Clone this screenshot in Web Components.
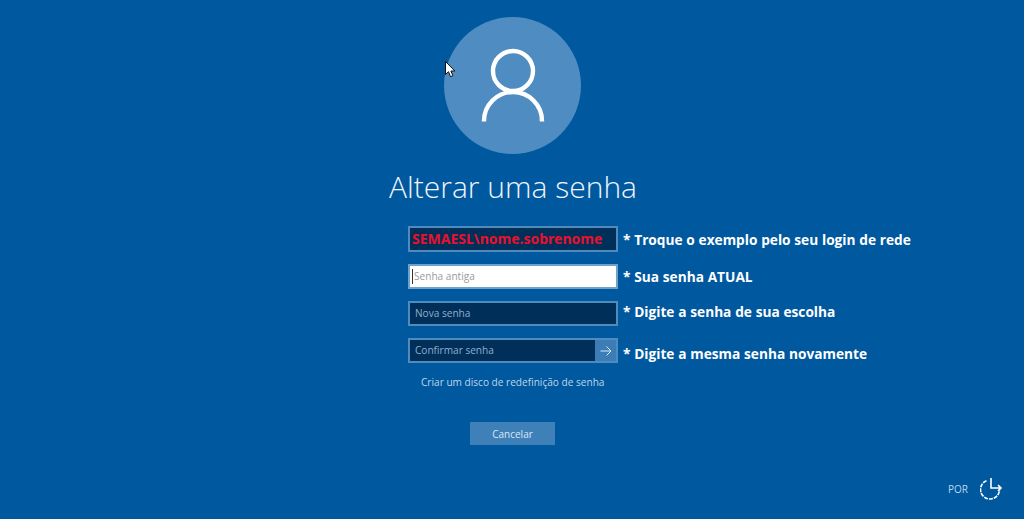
<!DOCTYPE html>
<html lang="pt">
<head>
<meta charset="utf-8">
<title>Alterar uma senha</title>
<style>
    html, body { margin: 0; height: 100%; }
    body { background: #00589f; overflow: hidden; }
</style>
</head>
<body>
<change-password-screen>
    <user-avatar slot="avatar"></user-avatar>
    <mouse-cursor slot="avatar"></mouse-cursor>
    <span slot="title">Alterar uma senha</span>

    <login-field tall value="SEMAESL\nome.sobrenome" note="* Troque o exemplo pelo seu login de rede"></login-field>
    <login-field focused placeholder="Senha antiga" note="* Sua senha ATUAL"></login-field>
    <login-field placeholder="Nova senha" note="* Digite a senha de sua escolha" nudge></login-field>
    <login-field submit placeholder="Confirmar senha" note="* Digite a mesma senha novamente"></login-field>

    <span slot="link">Criar um disco de redefinição de senha</span>
    <span slot="cancel">Cancelar</span>

    <system-tray slot="tray"></system-tray>
</change-password-screen>

<script>
class ChangePasswordScreen extends HTMLElement {
    constructor() {
        super();
        const template = document.createElement("template");
        template.innerHTML = ChangePasswordScreen.template();
        this.attachShadow({ mode: "open" });
        this.shadowRoot.appendChild(template.content.cloneNode(true));
    }

    static template() {
        return `
            <style>
                :host {
                    display: flex; flex-direction: column; height: 519px; box-sizing: border-box;
                    padding-top: 17px; color: #fff; position: relative;
                    font-family: "Open Sans", "Noto Sans", sans-serif;
                }
                .avatar { position: relative; align-self: center; height: 137px; }
                h1 {
                    margin: 11px 0 0 2px; align-self: center; font-weight: 300; font-size: 30px;
                    line-height: 44px; height: 43px; color: #eef5fb;
                }
                .fields { display: flex; flex-direction: column; gap: 12px; margin: 18px 0 0 408px; }
                .link { margin: 12px 0 0 421px; font-size: 10.1px; line-height: 15px; color: #bcd6ec; }
                .cancel {
                    align-self: flex-start; margin: 32px 0 0 470px; width: 85px; height: 23px;
                    background: #3f80b9; color: #d9e8f5; font-size: 10px; line-height: 24px; text-align: center;
                }
                .tray { position: absolute; right: 21px; bottom: 19px; }
            </style>
            <div class="avatar"><slot name="avatar"></slot></div>
            <h1><slot name="title"></slot></h1>
            <div class="fields"><slot></slot></div>
            <div class="link"><slot name="link"></slot></div>
            <div class="cancel"><slot name="cancel"></slot></div>
            <div class="tray"><slot name="tray"></slot></div>
        `;
    }
}

class UserAvatar extends HTMLElement {
    constructor() {
        super();
        this.attachShadow({ mode: "open" });
        this.shadowRoot.innerHTML = `
            <style>
                :host { display: block; width: 137px; height: 137px; border-radius: 50%; background: #4f8cc1; }
                svg { display: block; }
            </style>
            <svg width="137" height="137" viewBox="0 0 137 137" fill="none" stroke="#fff" stroke-width="4.4">
                <circle cx="69" cy="54" r="20"/>
                <path d="M40 104.500v-.500a29 29 0 0 1 58 0v.500"/>
            </svg>
        `;
    }
}

class MouseCursor extends HTMLElement {
    constructor() {
        super();
        this.attachShadow({ mode: "open" });
        this.shadowRoot.innerHTML = `
            <style>
                :host { position: absolute; left: 1px; top: 44px; width: 12px; height: 18px; }
                svg { display: block; }
            </style>
            <svg width="12" height="18" viewBox="0 0 12 18">
                <path d="M.5.5v13l3-2.800 2 5 2.400-1-2-4.700h4z" fill="#fff" stroke="#111" stroke-width="1"/>
            </svg>
        `;
    }
}

class LoginField extends HTMLElement {
    constructor() {
        super();
        const template = document.createElement("template");
        template.innerHTML = LoginField.template();
        this.attachShadow({ mode: "open" });
        this.shadowRoot.appendChild(template.content.cloneNode(true));
    }

    connectedCallback() {
        const value = this.getAttribute("value");
        this.shadowRoot.querySelector(".text").textContent = value || this.getAttribute("placeholder");
        this.shadowRoot.querySelector(".note").textContent = this.getAttribute("note");
        this.shadowRoot.querySelector(".box").classList.toggle("has-value", !!value);
    }

    static template() {
        return `
            <style>
                :host { display: flex; align-items: center; height: 25px; }
                :host([tall]) { height: 26px; }
                .box {
                    box-sizing: border-box; width: 210px; height: 100%; display: flex;
                    background: #002f5a; border: 2px solid #4f8bbd; color: #8fb0cc;
                    font-size: 10.1px; line-height: 21px;
                }
                .text { flex: 1; padding-left: 5px; white-space: nowrap; }
                .has-value .text {
                    color: #e8112d; font-family: "Noto Sans", sans-serif; font-weight: 700;
                    font-size: 14px; padding-left: 2px;
                }
                :host([focused]) .box { background: #fff; color: #9a9a9a; border-color: #6ea2cb; }
                :host([focused]) .text { padding-left: 3px; border-left: 1px solid transparent; position: relative; }
                :host([focused]) .text::before {
                    content: ""; position: absolute; left: 1px; top: 3px; width: 1px; height: 15px; background: #333;
                }
                .go { display: none; }
                :host([submit]) .box { border-right: 0; }
                :host([submit]) .go {
                    display: flex; align-items: center; justify-content: center;
                    width: 23px; margin: -2px 0; background: #3c7db7; border: 2px solid #4f8bbd;
                    box-sizing: border-box; border-left: 0;
                }
                .note {
                    margin-left: 5px; color: #fff; font-family: "Open Sans", sans-serif; font-weight: 700;
                    font-size: 13.7px; word-spacing: .2px; white-space: nowrap; position: relative; top: 0;
                }
                :host([nudge]) .note { top: -2px; }
                :host([submit]) .note { top: 3px; }
            </style>
            <div class="box">
                <span class="text"></span>
                <span class="go">
                    <svg width="12" height="12" viewBox="0 0 12 12" fill="none" stroke="#dce9f4" stroke-width="1">
                        <path d="M.5 6h10.500M6.500 1.500 11 6l-4.500 4.500"/>
                    </svg>
                </span>
            </div>
            <span class="note"></span>
        `;
    }
}

class SystemTray extends HTMLElement {
    constructor() {
        super();
        this.attachShadow({ mode: "open" });
        this.shadowRoot.innerHTML = `
            <style>
                :host { display: flex; align-items: center; gap: 12px; color: #bcd6ec; font-size: 10px; font-family: "Open Sans", sans-serif; }
                svg { display: block; }
            </style>
            <span>POR</span>
            <svg width="23" height="22" viewBox="0 0 23 22" fill="none" stroke="#fff" stroke-width="1.600">
                <path d="M6.500 2.700a9.500 9.500 0 1 0 13 9.300" stroke-dasharray="4 1"/>
                <path d="M11 0v10h10M18 7l3 3-3 3"/>
            </svg>
        `;
    }
}

customElements.define("change-password-screen", ChangePasswordScreen);
customElements.define("user-avatar", UserAvatar);
customElements.define("mouse-cursor", MouseCursor);
customElements.define("login-field", LoginField);
customElements.define("system-tray", SystemTray);
</script>
</body>
</html>
